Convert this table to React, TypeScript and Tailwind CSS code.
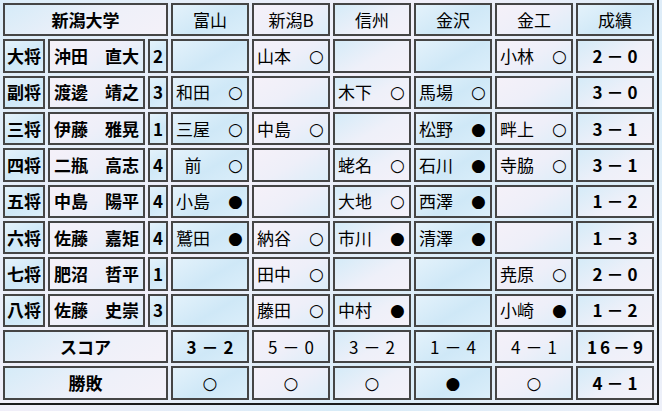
import React from "react";

type Mark = "○" | "●";
type Entry = { n: string; m: Mark } | null;

type Row = {
  pos: string;
  name: string;
  num: string;
  cells: Entry[];
  res: string;
};

const rows: Row[] = [
  { pos: "大将", name: "沖田　直大", num: "2", cells: [null, { n: "山本", m: "○" }, null, null, { n: "小林", m: "○" }], res: "2－0" },
  { pos: "副将", name: "渡邊　靖之", num: "3", cells: [{ n: "和田", m: "○" }, null, { n: "木下", m: "○" }, { n: "馬場", m: "○" }, null], res: "3－0" },
  { pos: "三将", name: "伊藤　雅晃", num: "1", cells: [{ n: "三屋", m: "○" }, { n: "中島", m: "○" }, null, { n: "松野", m: "●" }, { n: "畔上", m: "○" }], res: "3－1" },
  { pos: "四将", name: "二瓶　高志", num: "4", cells: [{ n: "前", m: "○" }, null, { n: "蛯名", m: "○" }, { n: "石川", m: "●" }, { n: "寺脇", m: "○" }], res: "3－1" },
  { pos: "五将", name: "中島　陽平", num: "4", cells: [{ n: "小島", m: "●" }, null, { n: "大地", m: "○" }, { n: "西澤", m: "●" }, null], res: "1－2" },
  { pos: "六将", name: "佐藤　嘉矩", num: "4", cells: [{ n: "鷲田", m: "●" }, { n: "納谷", m: "○" }, { n: "市川", m: "●" }, { n: "清澤", m: "●" }, null], res: "1－3" },
  { pos: "七将", name: "肥沼　哲平", num: "1", cells: [null, { n: "田中", m: "○" }, null, null, { n: "尭原", m: "○" }], res: "2－0" },
  { pos: "八将", name: "佐藤　史崇", num: "3", cells: [null, { n: "藤田", m: "○" }, { n: "中村", m: "●" }, null, { n: "小崎", m: "●" }], res: "1－2" },
];

const teams = ["富山", "新潟B", "信州", "金沢", "金工"];

const cellBase =
  "h-[33.33px] p-0 border-2 border-[#454545] align-middle leading-[20px] text-[17px]";

const blue = "bg-[linear-gradient(150deg,#e4f2fb_0%,#cfe8f7_55%,#dbeefa_100%)]";
const white = "bg-[linear-gradient(150deg,#f5f1f9_0%,#eeeff9_50%,#dcedf9_100%)]";
const mix = "bg-[linear-gradient(150deg,#d5ebf8_0%,#eef0f9_55%,#f4f1f9_100%)]";

const teamBg = [blue, white, mix, blue, white];

const markFont = "font-['DejaVu_Sans',sans-serif] text-[17px]";

function TeamCell({ e, bg }: { e: Entry; bg: string }) {
  return (
    <td className={`${cellBase} ${bg}`}>
      {e && (
        <div className="flex items-center pl-[3px] whitespace-nowrap">
          <span className={`w-[34px] ${e.n.length === 1 ? "text-center" : "text-left"}`}>{e.n}</span>
          <span className={`ml-[17px] w-[17px] text-center ${markFont}`}>{e.m}</span>
        </div>
      )}
    </td>
  );
}

export default function App() {
  return (
    <div className="w-[662px] h-[411px] overflow-hidden bg-[linear-gradient(135deg,#dcedf9_0%,#f1eff9_40%,#d8ecf8_70%,#eef0f9_100%)] font-['Noto_Sans_CJK_JP','Noto_Sans',sans-serif] text-black">
      <table className="table-fixed w-[659px] border-separate border-spacing-[3px] border-r-2 border-b-2 border-[#1c1c1c]">
        <colgroup>
          <col className="w-[42px]" />
          <col className="w-[97px]" />
          <col className="w-[20px]" />
          <col className="w-[78px]" />
          <col className="w-[78px]" />
          <col className="w-[78px]" />
          <col className="w-[78px]" />
          <col className="w-[78px]" />
          <col className="w-[78px]" />
        </colgroup>
        <tbody>
          <tr>
            <td colSpan={3} className={`${cellBase} ${mix} text-center font-bold`}>新潟大学</td>
            {teams.map((t, i) => (
              <td key={t} className={`${cellBase} ${teamBg[i]} text-center`}>{t}</td>
            ))}
            <td className={`${cellBase} ${blue} text-center`}>成績</td>
          </tr>
          {rows.map((r) => (
            <tr key={r.pos}>
              <td className={`${cellBase} ${blue} text-center font-bold`}>{r.pos}</td>
              <td className={`${cellBase} ${white} pl-[4px] font-bold whitespace-nowrap`}>{r.name}</td>
              <td className={`${cellBase} ${blue} text-center font-bold`}>{r.num}</td>
              {r.cells.map((c, i) => (
                <TeamCell key={i} e={c} bg={teamBg[i]} />
              ))}
              <td className={`${cellBase} ${mix} text-center font-bold tracking-[4px] pl-[4px]`}>{r.res}</td>
            </tr>
          ))}
          <tr>
            <td colSpan={3} className={`${cellBase} ${mix} text-center font-bold`}>スコア</td>
            <td className={`${cellBase} ${teamBg[0]} text-center font-bold tracking-[5px] pl-[5px]`}>3－2</td>
            <td className={`${cellBase} ${teamBg[1]} text-center tracking-[5px] pl-[5px]`}>5－0</td>
            <td className={`${cellBase} ${teamBg[2]} text-center tracking-[5px] pl-[5px]`}>3－2</td>
            <td className={`${cellBase} ${teamBg[3]} text-center tracking-[5px] pl-[5px]`}>1－4</td>
            <td className={`${cellBase} ${teamBg[4]} text-center tracking-[5px] pl-[5px]`}>4－1</td>
            <td className={`${cellBase} ${mix} text-center font-bold tracking-[3px] pl-[3px]`}>16－9</td>
          </tr>
          <tr>
            <td colSpan={3} className={`${cellBase} ${mix} text-center font-bold`}>勝敗</td>
            <td className={`${cellBase} ${teamBg[0]} text-center`}><span className={markFont}>○</span></td>
            <td className={`${cellBase} ${teamBg[1]} text-center`}><span className={markFont}>○</span></td>
            <td className={`${cellBase} ${teamBg[2]} text-center`}><span className={markFont}>○</span></td>
            <td className={`${cellBase} ${teamBg[3]} text-center`}><span className={markFont}>●</span></td>
            <td className={`${cellBase} ${teamBg[4]} text-center`}><span className={markFont}>○</span></td>
            <td className={`${cellBase} ${mix} text-center font-bold tracking-[4px] pl-[4px]`}>4－1</td>
          </tr>
        </tbody>
      </table>
    </div>
  );
}
